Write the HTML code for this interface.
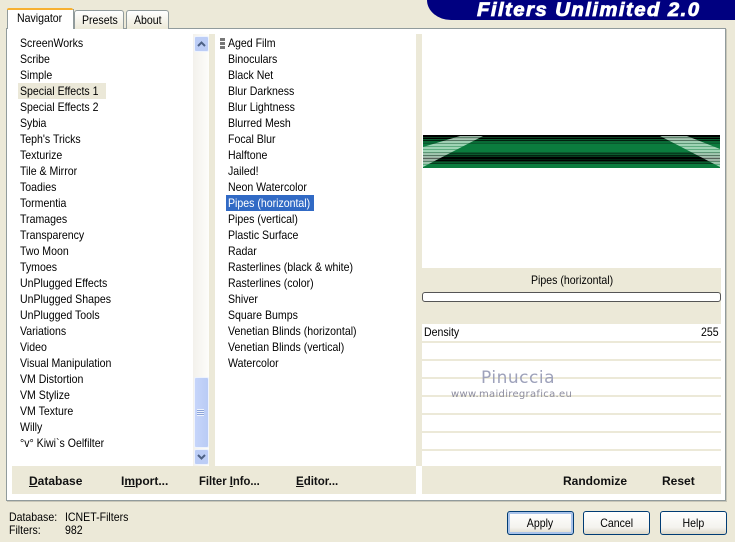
<!DOCTYPE html>
<html><head><meta charset="utf-8"><style>
html,body{margin:0;padding:0}
body{width:735px;height:542px;overflow:hidden;background:#ece9d8;position:relative;font-family:"Liberation Sans",sans-serif;font-size:12px;color:#000}
.a,.t{position:absolute}
.t{white-space:nowrap;line-height:16px;height:16px;transform:scaleX(.88);transform-origin:0 0}
.b{font-weight:bold;font-size:12px;color:#111;transform:none}
.btn{position:absolute;top:511px;width:65px;height:22px;border:1px solid #003c74;border-radius:3px;background:linear-gradient(#fff,#f4f3ee 70%,#dcd8c8);text-align:center;line-height:22px}
.btn span{display:inline-block;transform:scaleX(.88)}
</style></head><body>
<div class="a" style="left:427px;top:0;width:308px;height:20px;background:#000080;border-bottom-left-radius:24px 20px"></div>
<div class="t" style="left:477px;top:0;height:20px;line-height:20px;padding-top:1px;font-size:19px;font-weight:bold;font-style:italic;color:#fff;letter-spacing:1.35px;-webkit-text-stroke:.8px #fff;transform:scaleX(1.07)">Filters Unlimited 2.0</div>

<div class="a" style="left:6px;top:28px;width:718px;height:471px;border:1px solid #919b9c;background:#fff;box-shadow:1px 1px 0 #c8c6b8"></div>

<div class="a" style="left:74px;top:10px;width:48px;height:18px;border:1px solid #919b9c;border-bottom:0;border-radius:3px 3px 0 0;background:linear-gradient(#fff,#ece9d8)"></div>
<div class="a" style="left:126px;top:10px;width:41px;height:18px;border:1px solid #919b9c;border-bottom:0;border-radius:3px 3px 0 0;background:linear-gradient(#fff,#ece9d8)"></div>
<div class="a" style="left:7px;top:9px;width:65px;height:20px;border:1px solid #919b9c;border-top:0;border-bottom:0;background:#fff"></div>
<div class="a" style="left:7px;top:8px;width:66px;height:2px;background:#f7b030;border-radius:3px 3px 0 0"></div>
<div class="t" style="left:17px;top:10px">Navigator</div>
<div class="t" style="left:82px;top:12px">Presets</div>
<div class="t" style="left:134px;top:12px">About</div>

<div class="a" style="left:18px;top:83px;width:88px;height:16px;background:#ebe8d8"></div>
<div class="a" style="left:226px;top:195px;width:88px;height:16px;background:#316ac5"></div>

<div class="t" style="left:20px;top:35px">ScreenWorks</div>
<div class="t" style="left:20px;top:51px">Scribe</div>
<div class="t" style="left:20px;top:67px">Simple</div>
<div class="t" style="left:20px;top:83px">Special Effects 1</div>
<div class="t" style="left:20px;top:99px">Special Effects 2</div>
<div class="t" style="left:20px;top:115px">Sybia</div>
<div class="t" style="left:20px;top:131px">Teph's Tricks</div>
<div class="t" style="left:20px;top:147px">Texturize</div>
<div class="t" style="left:20px;top:163px">Tile &amp; Mirror</div>
<div class="t" style="left:20px;top:179px">Toadies</div>
<div class="t" style="left:20px;top:195px">Tormentia</div>
<div class="t" style="left:20px;top:211px">Tramages</div>
<div class="t" style="left:20px;top:227px">Transparency</div>
<div class="t" style="left:20px;top:243px">Two Moon</div>
<div class="t" style="left:20px;top:259px">Tymoes</div>
<div class="t" style="left:20px;top:275px">UnPlugged Effects</div>
<div class="t" style="left:20px;top:291px">UnPlugged Shapes</div>
<div class="t" style="left:20px;top:307px">UnPlugged Tools</div>
<div class="t" style="left:20px;top:323px">Variations</div>
<div class="t" style="left:20px;top:339px">Video</div>
<div class="t" style="left:20px;top:355px">Visual Manipulation</div>
<div class="t" style="left:20px;top:371px">VM Distortion</div>
<div class="t" style="left:20px;top:387px">VM Stylize</div>
<div class="t" style="left:20px;top:403px">VM Texture</div>
<div class="t" style="left:20px;top:419px">Willy</div>
<div class="t" style="left:20px;top:435px">°v° Kiwi`s Oelfilter</div>

<div class="a" style="left:220px;top:38px;width:5px;height:11px;background:repeating-linear-gradient(#777 0 3px,#fff 3px 4px)"></div>
<div class="t" style="left:228px;top:35px">Aged Film</div>
<div class="t" style="left:228px;top:51px">Binoculars</div>
<div class="t" style="left:228px;top:67px">Black Net</div>
<div class="t" style="left:228px;top:83px">Blur Darkness</div>
<div class="t" style="left:228px;top:99px">Blur Lightness</div>
<div class="t" style="left:228px;top:115px">Blurred Mesh</div>
<div class="t" style="left:228px;top:131px">Focal Blur</div>
<div class="t" style="left:228px;top:147px">Halftone</div>
<div class="t" style="left:228px;top:163px">Jailed!</div>
<div class="t" style="left:228px;top:179px">Neon Watercolor</div>
<div class="t" style="left:228px;top:195px;color:#fff">Pipes (horizontal)</div>
<div class="t" style="left:228px;top:211px">Pipes (vertical)</div>
<div class="t" style="left:228px;top:227px">Plastic Surface</div>
<div class="t" style="left:228px;top:243px">Radar</div>
<div class="t" style="left:228px;top:259px">Rasterlines (black &amp; white)</div>
<div class="t" style="left:228px;top:275px">Rasterlines (color)</div>
<div class="t" style="left:228px;top:291px">Shiver</div>
<div class="t" style="left:228px;top:307px">Square Bumps</div>
<div class="t" style="left:228px;top:323px">Venetian Blinds (horizontal)</div>
<div class="t" style="left:228px;top:339px">Venetian Blinds (vertical)</div>
<div class="t" style="left:228px;top:355px">Watercolor</div>

<!-- scrollbar -->
<div class="a" style="left:193px;top:34px;width:16px;height:432px;background:linear-gradient(90deg,#f3f1ec,#fdfdfa)"></div>
<div class="a" style="left:209px;top:34px;width:6px;height:432px;background:#ece9d8"></div>
<div class="a" style="left:416px;top:34px;width:6px;height:432px;background:#ece9d8"></div>
<div class="a" style="left:194px;top:36px;width:13px;height:14px;border:1px solid #eef3fd;border-radius:2px;background:#bccdf6"></div>
<svg class="a" style="left:194px;top:36px" width="15" height="16"><path d="M4 10 L7.5 6.5 L11 10" fill="none" stroke="#4d6185" stroke-width="2"/></svg>
<div class="a" style="left:194px;top:377px;width:13px;height:69px;border:1px solid #eef3fd;border-radius:2px;background:linear-gradient(90deg,#c6d5fa,#b9cbf5)"></div>
<div class="a" style="left:197px;top:409px;width:7px;height:7px;background:repeating-linear-gradient(#eef3fd 0 1px,#8ca3d8 1px 2px)"></div>
<div class="a" style="left:194px;top:449px;width:13px;height:14px;border:1px solid #eef3fd;border-radius:2px;background:#bccdf6"></div>
<svg class="a" style="left:194px;top:449px" width="15" height="16"><path d="M4 6 L7.5 9.5 L11 6" fill="none" stroke="#4d6185" stroke-width="2"/></svg>

<!-- preview -->
<svg class="a" style="left:423px;top:135px" width="297" height="33" shape-rendering="crispEdges">
<defs><pattern id="st" width="4" height="3" patternUnits="userSpaceOnUse"><rect width="4" height="2" fill="#d8f5e2" fill-opacity=".72"/><rect y="2" width="4" height="1" fill="#d8f5e2" fill-opacity=".4"/></pattern></defs>
<rect width="297" height="33" fill="#0a7a3c"/>
<rect y="0" width="297" height="2" fill="#000"/>
<rect y="2" width="297" height="1" fill="#0a3f20"/>
<rect y="3" width="297" height="1" fill="#000"/>
<rect y="4" width="297" height="1" fill="#0b5a2e"/>
<rect y="5" width="297" height="1" fill="#02200f"/>
<rect y="6" width="297" height="2" fill="#0a6a36"/>
<rect y="8" width="297" height="1" fill="#0a5a2e"/>
<rect y="9" width="297" height="8" fill="#0b7c3e"/>
<rect y="17" width="297" height="1" fill="#0a5a2e"/>
<rect y="18" width="297" height="1" fill="#063c1e"/>
<rect y="19" width="297" height="1" fill="#0a5a2e"/>
<rect y="20" width="297" height="1" fill="#02200f"/>
<rect y="21" width="297" height="1" fill="#063c1e"/>
<rect y="22" width="297" height="2" fill="#000"/>
<rect y="24" width="297" height="1" fill="#02200f"/>
<rect y="25" width="297" height="1" fill="#000"/>
<rect y="26" width="297" height="1" fill="#063c1e"/>
<rect y="27" width="297" height="1" fill="#0a5a2e"/>
<rect y="28" width="297" height="1" fill="#063c1e"/>
<rect y="29" width="297" height="4" fill="#0b7c3e"/>
<g shape-rendering="auto"><polygon points="37,1 60,1 0,32 0,12" fill="url(#st)"/><polygon points="237,1 264,1 297,14 297,32" fill="url(#st)"/></g>
</svg>

<!-- params -->
<div class="a" style="left:422px;top:268px;width:299px;height:56px;background:#ece9d8"></div>
<div class="t" style="left:531px;top:272px">Pipes (horizontal)</div>
<div class="a" style="left:422px;top:292px;width:297px;height:8px;border:1px solid #555;border-radius:3px;background:#fff"></div>
<div class="t" style="left:424px;top:324px">Density</div>
<div class="t" style="left:701px;top:324px">255</div>
<div class="a" style="left:422px;top:341px;width:299px;height:2px;background:#ece9d8"></div>
<div class="a" style="left:422px;top:359px;width:299px;height:2px;background:#ece9d8"></div>
<div class="a" style="left:422px;top:377px;width:299px;height:2px;background:#ece9d8"></div>
<div class="a" style="left:422px;top:395px;width:299px;height:2px;background:#ece9d8"></div>
<div class="a" style="left:422px;top:413px;width:299px;height:2px;background:#ece9d8"></div>
<div class="a" style="left:422px;top:431px;width:299px;height:2px;background:#ece9d8"></div>
<div class="a" style="left:422px;top:449px;width:299px;height:2px;background:#ece9d8"></div>

<div class="t" style="left:481px;top:368px;height:20px;line-height:20px;font-family:'DejaVu Sans',sans-serif;font-size:17px;letter-spacing:.5px;color:#9ea2bb;transform:none">Pinuccia</div>
<div class="t" style="left:451px;top:387px;font-family:'DejaVu Sans',sans-serif;font-size:10px;letter-spacing:.3px;color:#8d8d9f;transform:none">www.maidiregrafica.eu</div>

<!-- bottom bars -->
<div class="a" style="left:12px;top:466px;width:404px;height:28px;background:#ece9d8"></div>
<div class="a" style="left:416px;top:466px;width:6px;height:28px;background:#fff"></div>
<div class="a" style="left:422px;top:466px;width:299px;height:28px;background:#ece9d8"></div>
<div class="t b" style="left:29px;top:473px"><u>D</u>atabase</div>
<div class="t b" style="left:121px;top:473px">I<u>m</u>port...</div>
<div class="t b" style="left:199px;top:473px;transform:scaleX(.94)">Filter <u>I</u>nfo...</div>
<div class="t b" style="left:296px;top:473px;transform:scaleX(.96)"><u>E</u>ditor...</div>
<div class="t b" style="left:563px;top:473px">Randomize</div>
<div class="t b" style="left:662px;top:473px">Reset</div>

<!-- footer -->
<div class="t" style="left:9px;top:509px">Database:</div>
<div class="t" style="left:65px;top:509px">ICNET-Filters</div>
<div class="t" style="left:9px;top:522px">Filters:</div>
<div class="t" style="left:65px;top:522px">982</div>
<div class="btn" style="left:507px;box-shadow:inset 0 0 0 2px #a9c3ea"><span>Apply</span></div>
<div class="btn" style="left:583px"><span>Cancel</span></div>
<div class="btn" style="left:660px"><span>Help</span></div>
</body></html>
